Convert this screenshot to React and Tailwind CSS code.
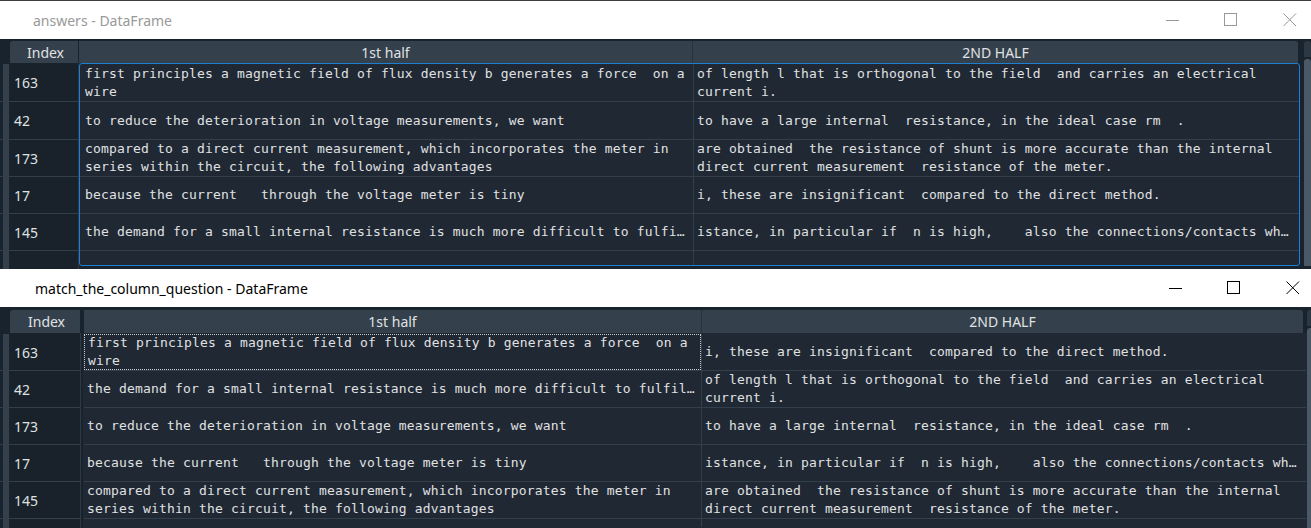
import React from 'react';

const mono = { fontFamily: '"DejaVu Sans Mono", "Liberation Mono", monospace' };

const answersRows = [
  {
    idx: '163',
    h: 38,
    a: ['first principles a magnetic field of flux density b generates a force  on a', 'wire'],
    b: ['of length l that is orthogonal to the field  and carries an electrical', 'current i.'],
  },
  {
    idx: '42',
    h: 38,
    a: ['to reduce the deterioration in voltage measurements, we want'],
    b: ['to have a large internal  resistance, in the ideal case rm  .'],
  },
  {
    idx: '173',
    h: 37,
    a: ['compared to a direct current measurement, which incorporates the meter in', 'series within the circuit, the following advantages'],
    b: ['are obtained  the resistance of shunt is more accurate than the internal', 'direct current measurement  resistance of the meter.'],
  },
  {
    idx: '17',
    h: 37,
    a: ['because the current   through the voltage meter is tiny'],
    b: ['i, these are insignificant  compared to the direct method.'],
  },
  {
    idx: '145',
    h: 37,
    a: ['the demand for a small internal resistance is much more difficult to fulfi…'],
    b: ['istance, in particular if  n is high,    also the connections/contacts wh…'],
  },
];

const matchRows = [
  {
    idx: '163',
    h: 37,
    a: ['first principles a magnetic field of flux density b generates a force  on a', 'wire'],
    b: ['i, these are insignificant  compared to the direct method.'],
  },
  {
    idx: '42',
    h: 37,
    a: ['the demand for a small internal resistance is much more difficult to fulfil…'],
    b: ['of length l that is orthogonal to the field  and carries an electrical', 'current i.'],
  },
  {
    idx: '173',
    h: 37,
    a: ['to reduce the deterioration in voltage measurements, we want'],
    b: ['to have a large internal  resistance, in the ideal case rm  .'],
  },
  {
    idx: '17',
    h: 37,
    a: ['because the current   through the voltage meter is tiny'],
    b: ['istance, in particular if  n is high,    also the connections/contacts wh…'],
  },
  {
    idx: '145',
    h: 37,
    a: ['compared to a direct current measurement, which incorporates the meter in', 'series within the circuit, the following advantages'],
    b: ['are obtained  the resistance of shunt is more accurate than the internal', 'direct current measurement  resistance of the meter.'],
  },
];

function TitleBar({ title, active, ctrlOffset }) {
  const color = active ? '#000000' : '#999999';
  return (
    <div className="h-[38px] bg-white flex items-center relative" style={{ color }}>
      <span
        className={`text-[14px] ${active ? 'ml-[35px] text-black' : 'ml-[33px] text-[#999999]'}`}
        style={{ fontFamily: '"Noto Sans", "Open Sans", sans-serif' }}
      >
        {title}
      </span>
      <div className={`ml-auto flex items-center h-full ${ctrlOffset}`}>
        {/* minimize */}
        <svg width="14" height="14" viewBox="0 0 14 14" className="mr-[44px]">
          <line x1="0" y1="7.5" x2="13" y2="7.5" stroke={color} strokeWidth="1" />
        </svg>
        {/* maximize */}
        <svg width="14" height="14" viewBox="0 0 14 14" className="mr-[45px]">
          <rect x="0.5" y="0.5" width="12" height="12" fill="none" stroke={color} strokeWidth="1" />
        </svg>
        {/* close */}
        <svg width="14" height="14" viewBox="0 0 14 14">
          <path d="M0.5 0.5 L13 13 M13 0.5 L0.5 13" stroke={color} strokeWidth="1" fill="none" />
        </svg>
      </div>
    </div>
  );
}

function Cell({ lines, pad, focus }) {
  return (
    <div
      className={`h-full flex flex-col justify-center overflow-hidden ${pad} ${
        focus ? 'border border-dotted border-[#c8ccd0]' : ''
      }`}
    >
      {lines.map((l, i) => (
        <div key={i} className="whitespace-pre leading-[18px] text-[13px] tracking-[0.17px] text-[#e0e1e3]" style={mono}>
          {l}
        </div>
      ))}
    </div>
  );
}

function DataFrame({ rows, cfg }) {
  return (
    <div className="flex bg-[#19232d]" style={{ height: cfg.height }}>
      <div className="flex-1 flex flex-col" style={{ paddingTop: cfg.top }}>
        {/* header */}
        <div
          className="flex text-[14px] text-[#e0e1e3]"
          style={{ height: cfg.headH, fontFamily: '"Noto Sans", "Open Sans", sans-serif' }}
        >
          <div className="w-[10px] shrink-0" />
          <div className="shrink-0 bg-[#34414c] rounded-tl-[3px] flex items-center justify-center pl-[3px]" style={{ width: cfg.idxW }}>
            Index
          </div>
          <div className="shrink-0" style={{ width: cfg.gap }} />
          <div className="shrink-0 bg-[#34414c] flex items-center justify-center border-r border-[#28323c]" style={{ width: cfg.aW }}>
            1st half
          </div>
          <div className="shrink-0 bg-[#34414c] rounded-tr-[3px] flex items-center justify-center" style={{ width: cfg.bW }}>
            2ND HALF
          </div>
        </div>
        {/* body */}
        <div className="flex flex-1 min-h-0">
          <div className="shrink-0 flex flex-col pt-[1px]" style={{ width: 10 + cfg.idxW }}>
            {rows.map((r) => (
              <div key={r.idx} className="flex border-b border-[#323f4a]" style={{ height: r.h }}>
                <div className="w-[3px]" />
                <div className="w-[6px] bg-[#34414c]" />
                <div className="w-[1px]" />
                <div
                  className="flex-1 flex items-center pl-[4px] text-[14px] text-[#dfe1e2] bg-[#19222b]"
                  style={{ fontFamily: '"Noto Sans", "Open Sans", sans-serif' }}
                >
                  {r.idx}
                </div>
              </div>
            ))}
            <div className="flex flex-1">
              <div className="w-[3px]" />
              <div className="w-[6px] bg-[#34414c]" />
              <div className="w-[1px]" />
              <div className="flex-1 bg-[#19222b]" />
            </div>
          </div>
          <div className="shrink-0 w-[1px] bg-[#2d3944]" />
          <div
            className={`shrink-0 flex flex-col bg-[#1f2833] overflow-hidden ${
              cfg.focused ? 'border border-[#1c7fd0] rounded-[3px]' : 'border border-transparent'
            }`}
            style={{ width: cfg.aW + cfg.bW + cfg.gap + 1, marginBottom: cfg.bottom, marginLeft: cfg.dataMl }}
          >
            {rows.map((r, i) => (
              <div key={r.idx} className="flex shrink-0 border-b border-[#33404b]" style={{ height: r.h }}>
                <div className="shrink-0 border-r border-[#33404b]" style={{ width: cfg.aW }}>
                  <Cell lines={r.a} pad={cfg.padA} focus={cfg.dotted && i === 0} />
                </div>
                <div className="flex-1 min-w-0">
                  <Cell lines={r.b} pad={cfg.padB} />
                </div>
              </div>
            ))}
            <div className="flex flex-1">
              <div className="shrink-0 border-r border-[#33404b]" style={{ width: cfg.aW }} />
            </div>
          </div>
        </div>
      </div>
      {/* scrollbar */}
      <div className="w-[7px] shrink-0 flex flex-col" style={{ paddingTop: cfg.top, paddingBottom: cfg.bottom }}>
        <div className="h-[16px] bg-[#2c3944] rounded-t-[3px]" />
        <div className="flex-1 bg-[#4b5966] rounded-t-[3px] mt-[2px]" />
      </div>
    </div>
  );
}

export default function App() {
  return (
    <div className="w-[1311px] h-[528px] overflow-hidden bg-[#19232d]">
      <div className="h-[1px] bg-[#3c3c3c]" />
      <TitleBar title="answers - DataFrame" active={false} ctrlOffset="mr-[14px]" />
      <DataFrame
        rows={answersRows}
        cfg={{
          height: 230,
          top: 2,
          headH: 22,
          bottom: 3,
          idxW: 68,
          gap: 1,
          aW: 614,
          bW: 605,
          dataMl: 0,
          padA: 'pl-[5px]',
          padB: 'pl-[3px]',
          focused: true,
          dotted: false,
        }}
      />
      <TitleBar title="match_the_column_question - DataFrame" active={true} ctrlOffset="mr-[11px]" />
      <DataFrame
        rows={matchRows}
        cfg={{
          height: 221,
          top: 3,
          headH: 23,
          bottom: 0,
          idxW: 70,
          gap: 4,
          aW: 618,
          bW: 601,
          dataMl: 2,
          padA: 'pl-[3px]',
          padB: 'pl-[3px]',
          focused: false,
          dotted: true,
        }}
      />
    </div>
  );
}
